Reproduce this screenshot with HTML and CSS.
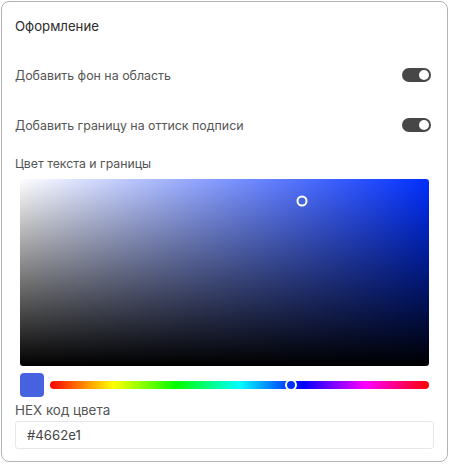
FILE: index.html
```html
<!DOCTYPE html>
<html lang="ru">
<head>
<meta charset="utf-8">
<link rel="stylesheet" href="styles.css">
</head>
<body>
<div class="card">
  <div class="title">Оформление</div>
  <div class="row">
    <span class="label">Добавить фон на область</span>
    <span class="toggle"><span class="knob"></span></span>
  </div>
  <div class="row">
    <span class="label">Добавить границу на оттиск подписи</span>
    <span class="toggle"><span class="knob"></span></span>
  </div>
  <div class="small-label">Цвет текста и границы</div>
  <div class="picker">
    <div class="sv">
      <span class="sv-dot" style="left: 68.9%; top: 11.8%;"></span>
    </div>
    <div class="hue-row">
      <span class="swatch"></span>
      <div class="hue">
        <span class="hue-thumb" style="left: 63.6%;"></span>
      </div>
    </div>
  </div>
  <div class="small-label hex-label">HEX код цвета</div>
  <div class="input">#4662e1</div>
</div>
</body>
</html>
```
FILE: styles.css
```css
html, body {
  margin: 0;
  padding: 0;
  background: #ffffff;
}
body {
  font-family: Inter, "Noto Sans", sans-serif;
  padding: 1px 0 0 1px;
}
.card {
  box-sizing: border-box;
  width: 447px;
  border: 1px solid #b3b3b3;
  border-radius: 8px;
  padding: 0 13px 12px 13px;
  background: #fff;
}
.title {
  height: 48px;
  line-height: 48px;
  font-size: 13.2px;
  color: #2b2b2b;
}
.row {
  height: 50px;
  display: flex;
  align-items: center;
  justify-content: space-between;
}
.label {
  font-size: 12.4px;
  color: #555555;
}
.toggle {
  position: relative;
  width: 29px;
  height: 14px;
  border-radius: 7px;
  background: #474747;
  margin-right: 3px;
}
.knob {
  position: absolute;
  right: 2px;
  top: 2px;
  width: 10px;
  height: 10px;
  border-radius: 50%;
  background: #fff;
}
.small-label {
  margin-top: 6px;
  height: 16px;
  line-height: 16px;
  font-size: 12.3px;
  color: #555555;
}
.picker {
  margin: 7px 5px 0 5px;
}
.sv {
  position: relative;
  height: 187px;
  border-radius: 3px;
  background:
    linear-gradient(to top, #000 0%, rgba(0,0,0,0) 100%),
    linear-gradient(to right, #fff 0%, rgb(0,47,255) 100%);
}
.sv-dot {
  position: absolute;
  width: 7px;
  height: 7px;
  border: 2px solid #fff;
  border-radius: 50%;
  transform: translate(-50%, -50%);
}
.hue-row {
  margin-top: 7px;
  height: 24px;
  display: flex;
  align-items: center;
  gap: 6px;
}
.swatch {
  width: 24px;
  height: 24px;
  border-radius: 4px;
  background: #4662e1;
  flex: none;
}
.hue {
  position: relative;
  flex: 1;
  height: 8px;
  border-radius: 4px;
  background: linear-gradient(to right,
    #ff0000 0%, #ffff00 16.67%, #00ff00 33.33%, #00ffff 50%,
    #0000ff 66.67%, #ff00ff 83.33%, #ff0000 100%);
}
.hue-thumb {
  position: absolute;
  top: 50%;
  width: 8px;
  height: 8px;
  border: 2px solid #fff;
  border-radius: 50%;
  background: rgb(0,47,255);
  transform: translate(-50%, -50%);
}
.hex-label {
  margin-top: 5px;
  font-size: 13.4px;
}
.input {
  box-sizing: border-box;
  margin-top: 3px;
  height: 28px;
  border: 1px solid #e6e8ec;
  border-radius: 3px;
  padding: 0 11px;
  line-height: 26px;
  font-size: 13.2px;
  color: #444;
}
```
